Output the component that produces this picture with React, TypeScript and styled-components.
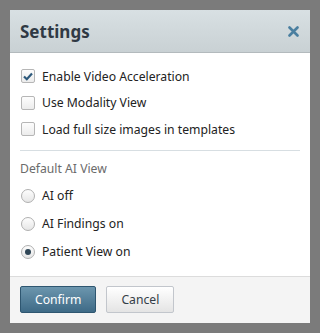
import React, { useState } from 'react';
import styled, { createGlobalStyle } from 'styled-components';

const GlobalStyle = createGlobalStyle`
  html, body {
    margin: 0;
    padding: 0;
    background: #7b7b7b;
  }
  body {
    font-family: 'Noto Sans', 'Open Sans', sans-serif;
  }
`;

const Page = styled.div`
  padding: 10px;
`;

const Dialog = styled.div`
  width: 300px;
  background: #ffffff;
  display: flex;
  flex-direction: column;
`;

const Header = styled.div`
  height: 42px;
  padding: 0 10px;
  display: flex;
  align-items: center;
  justify-content: space-between;
  background: linear-gradient(#d8e0e3, #c9d1d4);
  border-bottom: 1px solid #b3babd;
`;

const Title = styled.h2`
  margin: 0;
  font-size: 17px;
  font-weight: 700;
  color: #2f3944;
`;

const CloseButton = styled.button`
  border: none;
  background: none;
  padding: 0;
  width: 14px;
  height: 14px;
  display: flex;
  align-items: center;
  justify-content: center;
  cursor: pointer;
`;

const Body = styled.div`
  padding: 10px 10px 10px;
`;

const OptionRow = styled.label<{ $height: number }>`
  display: flex;
  align-items: center;
  gap: 7px;
  height: ${(p) => p.$height}px;
  font-size: 12.2px;
  color: #222;
  cursor: pointer;
`;

const CheckBox = styled.span<{ $checked: boolean }>`
  box-sizing: border-box;
  width: 14px;
  height: 14px;
  margin-left: 1px;
  border: 1px solid #b6b6b6;
  border-radius: 2px;
  background: linear-gradient(#fdfdfd, #ececec);
  display: flex;
  align-items: center;
  justify-content: center;
`;

const Radio = styled.span<{ $checked: boolean }>`
  box-sizing: border-box;
  width: 14px;
  height: 14px;
  margin-left: 1px;
  border: 1px solid #b0b0b0;
  border-radius: 50%;
  background: linear-gradient(#fdfdfd, #e6e6e6);
  display: flex;
  align-items: center;
  justify-content: center;

  &::after {
    content: '';
    display: ${(p) => (p.$checked ? 'block' : 'none')};
    width: 6px;
    height: 6px;
    border-radius: 50%;
    background: #2f4656;
  }
`;

const Divider = styled.hr`
  border: none;
  border-top: 1px solid #d7dee2;
  margin: 7px 0 8px;
`;

const SectionLabel = styled.div`
  font-size: 12.2px;
  color: #6b6b6b;
  height: 20px;
  display: flex;
  align-items: center;
  margin-bottom: 3px;
`;

const Footer = styled.div`
  background: #f4f4f4;
  border-top: 1px solid #dcdcdc;
  padding: 9px 10px 10px;
  display: flex;
  gap: 10px;
`;

const Button = styled.button<{ $primary?: boolean }>`
  height: 27px;
  padding: 0 14px;
  font-family: inherit;
  font-size: 12.2px;
  border-radius: 2px;
  cursor: pointer;
  border: 1px solid ${(p) => (p.$primary ? '#2e5670' : '#c2c6cc')};
  color: ${(p) => (p.$primary ? '#ffffff' : '#333d47')};
  background: ${(p) =>
    p.$primary
      ? 'linear-gradient(#6c96ae, #3e6a86)'
      : 'linear-gradient(#ffffff, #e4e4e4)'};
`;

const checks = [
  { label: 'Enable Video Acceleration', on: true },
  { label: 'Use Modality View', on: false },
  { label: 'Load full size images in templates', on: false },
];

const views = ['AI off', 'AI Findings on', 'Patient View on'];

export default function App() {
  const [flags, setFlags] = useState(checks.map((c) => c.on));
  const [view, setView] = useState(2);

  return (
    <Page>
      <GlobalStyle />
      <Dialog>
        <Header>
          <Title>Settings</Title>
          <CloseButton aria-label="Close">
            <svg width="11" height="11" viewBox="0 0 11 11">
              <path d="M1.5 1.5 L9.5 9.5 M9.5 1.5 L1.5 9.5" stroke="#4a7fa0" strokeWidth="2.6" strokeLinecap="round" />
            </svg>
          </CloseButton>
        </Header>
        <Body>
          {checks.map((c, i) => (
            <OptionRow
              key={c.label}
              $height={26.5}
              onClick={() => setFlags(flags.map((f, j) => (j === i ? !f : f)))}
            >
              <CheckBox $checked={flags[i]}>
                {flags[i] && (
                  <svg width="10" height="9" viewBox="0 0 10 9">
                    <path d="M1 4.5 L3.8 7.2 L9 1.5" fill="none" stroke="#2e5a7c" strokeWidth="2.2" />
                  </svg>
                )}
              </CheckBox>
              {c.label}
            </OptionRow>
          ))}
          <Divider />
          <SectionLabel>Default AI View</SectionLabel>
          {views.map((v, i) => (
            <OptionRow key={v} $height={28} onClick={() => setView(i)}>
              <Radio $checked={view === i} />
              {v}
            </OptionRow>
          ))}
        </Body>
        <Footer>
          <Button $primary>Confirm</Button>
          <Button>Cancel</Button>
        </Footer>
      </Dialog>
    </Page>
  );
}
